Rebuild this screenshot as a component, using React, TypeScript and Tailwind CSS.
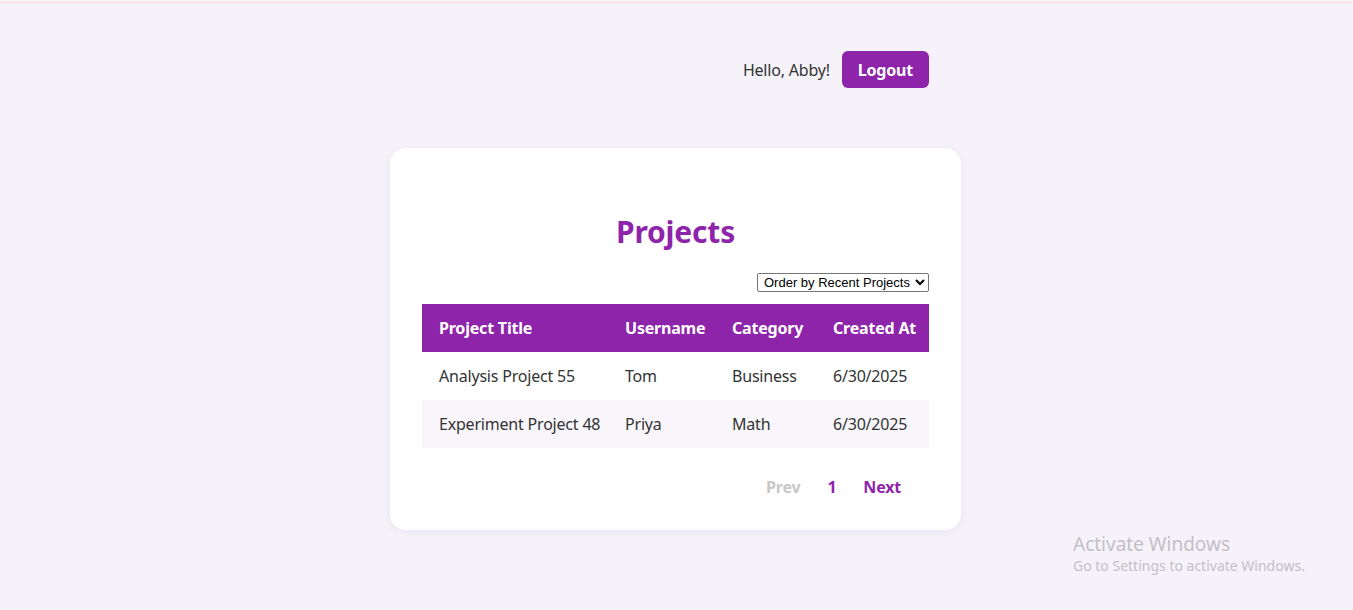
import React from 'react';

const ROWS = [
  { title: 'Analysis Project 55', user: 'Tom', category: 'Business', created: '6/30/2025' },
  { title: 'Experiment Project 48', user: 'Priya', category: 'Math', created: '6/30/2025' },
];

const FONT = { fontFamily: '"Noto Sans", "Open Sans", sans-serif' };

export default function App() {
  return (
    <div className="relative min-h-[610px] bg-[#f5f2f9] text-[#333] tracking-[-0.2px]" style={FONT}>
      <div className="h-[2px] bg-[#fcf1f3]" />
      <div className="h-px bg-[#f3dade]" />

      <div className="pr-[2px]">
        <div className="mx-auto w-[571px]">
          {/* header */}
          <div className="flex items-center justify-end gap-3 px-8 pt-[48px]">
            <span className="text-[16px] text-[#333]">Hello, Abby!</span>
            <button
              type="button"
              className="h-[37px] rounded-md bg-[#8e24aa] px-4 text-[16px] font-bold text-white"
            >
              Logout
            </button>
          </div>

          {/* card */}
          <div className="mt-[60px] rounded-2xl bg-white px-8 pt-8 pb-[31px] shadow-[0_2px_10px_rgba(80,40,120,0.06)]">
            <h2 className="mt-8 text-center text-[30px] font-bold leading-[40px] text-[#8e24aa]">Projects</h2>

            <div className="mt-[21px] flex justify-end">
              <select
                className="h-[19px] rounded-[2px] border border-[#767676] bg-white px-[2px] text-[13px] leading-none tracking-normal text-black"
                style={{ fontFamily: '"Liberation Sans", Arial, sans-serif' }}
                defaultValue="recent"
              >
                <option value="recent">Order by Recent Projects</option>
                <option value="old">Order by Oldest Projects</option>
              </select>
            </div>

            <table className="mt-3 w-full border-collapse text-left text-[16px]">
              <thead>
                <tr className="h-12 bg-[#8e24aa] text-white">
                  <th className="w-[186px] pl-[17px] font-bold">Project Title</th>
                  <th className="w-[107px] pl-[17px] font-bold">Username</th>
                  <th className="w-[101px] pl-[17px] font-bold">Category</th>
                  <th className="pl-[17px] font-bold">Created At</th>
                </tr>
              </thead>
              <tbody>
                {ROWS.map((r, i) => (
                  <tr key={r.title} className={`h-12 ${i % 2 === 1 ? 'bg-[#f8f6fa]' : 'bg-white'}`}>
                    <td className="pl-[17px] text-[#333]">{r.title}</td>
                    <td className="pl-[17px] text-[#333]">{r.user}</td>
                    <td className="pl-[17px] text-[#333]">{r.category}</td>
                    <td className="pl-[17px] text-[#333]">{r.created}</td>
                  </tr>
                ))}
              </tbody>
            </table>

            {/* pagination */}
            <div className="mt-[27px] flex justify-end gap-[3px] pr-4">
              <button type="button" className="px-3 text-[16px] leading-6 font-bold text-[#c8c8c8]">Prev</button>
              <button type="button" className="px-3 text-[16px] leading-6 font-bold text-[#8e24aa]">1</button>
              <button type="button" className="px-3 text-[16px] leading-6 font-bold text-[#8e24aa]">Next</button>
            </div>
          </div>
        </div>
      </div>

      {/* OS watermark */}
      <div className="pointer-events-none absolute top-[532px] left-[1073px] tracking-normal text-[#c3c0c8]">
        <div className="text-[19px] leading-6">Activate Windows</div>
        <div className="text-[14px] leading-5">Go to Settings to activate Windows.</div>
      </div>
    </div>
  );
}
